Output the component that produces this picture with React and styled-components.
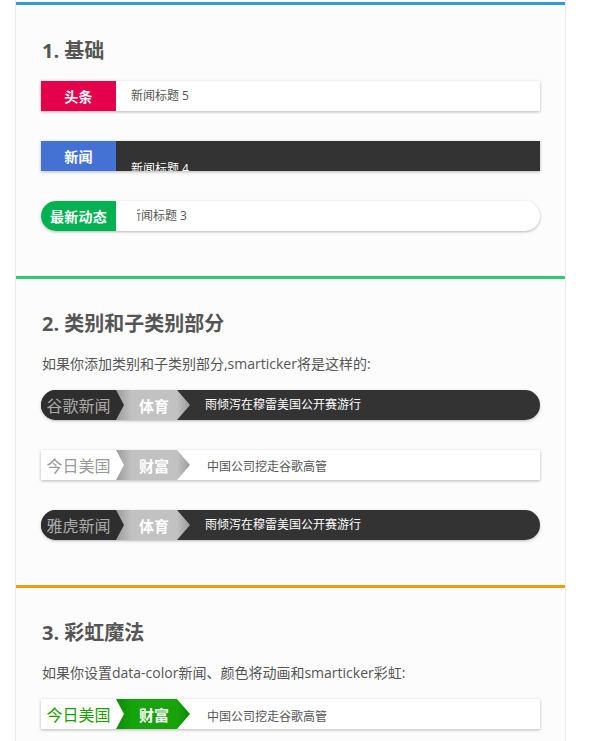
import React from 'react';
import styled, { createGlobalStyle } from 'styled-components';

const GlobalStyle = createGlobalStyle`
  html, body { margin: 0; padding: 0; background: #fff; }
  body { font-family: "Open Sans", "Noto Sans CJK SC", sans-serif; }
`;

const Panel = styled.div`
  margin: 0 0 0 15px;
  padding-top: 2px;
  width: 549px;
  background: #fcfcfc;
  border-left: 1px solid #ececec;
  border-right: 1px solid #ececec;
`;

const Section = styled.section`
  border-top: 3px solid ${(p) => p.$color};
  padding: ${(p) => (p.$first ? 34 : 33)}px 25px 15px;
`;

const Heading = styled.h2`
  margin: 0 0 18px 1px;
  font-size: 20px;
  line-height: 24px;
  font-weight: 700;
  color: #555;
`;

const Intro = styled.p`
  margin: 0 0 16px 1px;
  font-size: 14px;
  line-height: 20px;
  color: #555;
`;

const Ticker = styled.div`
  display: flex;
  height: 30px;
  margin-bottom: 30px;
  background: ${(p) => p.$bg || '#fff'};
  border-radius: ${(p) => (p.$round ? '15px' : '0')};
  box-shadow: 0 1px 3px rgba(0, 0, 0, 0.28);
  overflow: hidden;
`;

const Label = styled.div`
  flex: 0 0 75px;
  display: flex;
  align-items: center;
  justify-content: center;
  background: ${(p) => p.$bg};
  color: #fff;
  font-size: 14px;
  font-weight: 700;
  letter-spacing: 0.3px;
`;

const Category = styled.div`
  position: relative;
  flex: 0 0 75px;
  display: flex;
  align-items: center;
  justify-content: center;
  background: ${(p) => p.$bg};
  color: ${(p) => p.$color};
  font-size: 16px;
  z-index: 2;

  &::after {
    content: '';
    position: absolute;
    top: 0;
    left: 100%;
    width: 8px;
    height: 30px;
    background: ${(p) => p.$bg};
    clip-path: polygon(0 0, 100% 50%, 0 100%);
  }
`;

const SubCategory = styled.div`
  position: relative;
  flex: 0 0 auto;
  display: flex;
  align-items: center;
  padding: 0 8px 0 23px;
  background: linear-gradient(to right, ${(p) => p.$dark} 0, ${(p) => p.$bg} 16px, ${(p) => p.$bg} 100%);
  color: #fff;
  font-size: 15px;
  font-weight: 700;
  z-index: 1;

  &::after {
    content: '';
    position: absolute;
    top: 0;
    left: 100%;
    width: 13px;
    height: 30px;
    background: linear-gradient(to right, ${(p) => p.$bg} 0, ${(p) => p.$dark} 100%);
    clip-path: polygon(0 0, 100% 50%, 0 100%);
  }
`;

const Content = styled.div`
  flex: 1;
  display: flex;
  align-items: center;
  margin-left: ${(p) => p.$gap}px;
  overflow: hidden;
`;

const Item = styled.span`
  display: block;
  white-space: nowrap;
  font-size: 12px;
  line-height: 16px;
  color: ${(p) => p.$color || '#555'};
`;

const GREY = { bg: '#c2c2c2', dark: '#9c9c9c' };
const GREEN = { bg: '#17a30c', dark: '#0d8a05' };

const news = (text, color, shift) => (
  <Item $color={color} style={shift ? { transform: shift } : undefined}>
    {text}
  </Item>
);

export default function App() {
  return (
    <>
      <GlobalStyle />
      <Panel>
        <Section $color="#3498db" $first>
          <Heading>1. 基础</Heading>
          <Ticker>
            <Label $bg="#e4004b">头条</Label>
            <Content $gap={15}>{news('新闻标题 5')}</Content>
          </Ticker>
          <Ticker $bg="#333">
            <Label $bg="#4472d4">新闻</Label>
            <Content $gap={15}>{news('新闻标题 4', '#fff', 'translateY(13px)')}</Content>
          </Ticker>
          <Ticker $round>
            <Label $bg="#00b152">最新动态</Label>
            <Content $gap={21}>{news('新闻标题 3', '#555', 'translateX(-8px)')}</Content>
          </Ticker>
        </Section>

        <Section $color="#2ecc71">
          <Heading>2. 类别和子类别部分</Heading>
          <Intro>如果你添加类别和子类别部分,smarticker将是这样的:</Intro>
          <Ticker $bg="#333" $round>
            <Category $bg="#2e2e2e" $color="#aaa">谷歌新闻</Category>
            <SubCategory $bg={GREY.bg} $dark={GREY.dark}>体育</SubCategory>
            <Content $gap={28}>{news('雨倾泻在穆雷美国公开赛游行', '#fff')}</Content>
          </Ticker>
          <Ticker>
            <Category $bg="#fff" $color="#999">今日美国</Category>
            <SubCategory $bg={GREY.bg} $dark={GREY.dark}>财富</SubCategory>
            <Content $gap={28}>{news('中国公司挖走谷歌高管', '#555', 'translate(2px, 2px)')}</Content>
          </Ticker>
          <Ticker $bg="#333" $round>
            <Category $bg="#2e2e2e" $color="#aaa">雅虎新闻</Category>
            <SubCategory $bg={GREY.bg} $dark={GREY.dark}>体育</SubCategory>
            <Content $gap={28}>{news('雨倾泻在穆雷美国公开赛游行', '#fff')}</Content>
          </Ticker>
        </Section>

        <Section $color="#f39c12">
          <Heading>3. 彩虹魔法</Heading>
          <Intro>如果你设置data-color新闻、颜色将动画和smarticker彩虹:</Intro>
          <Ticker>
            <Category $bg="#fff" $color="#1d9e00">今日美国</Category>
            <SubCategory $bg={GREEN.bg} $dark={GREEN.dark}>财富</SubCategory>
            <Content $gap={28}>{news('中国公司挖走谷歌高管', '#555', 'translate(2px, 3px)')}</Content>
          </Ticker>
        </Section>
      </Panel>
    </>
  );
}
